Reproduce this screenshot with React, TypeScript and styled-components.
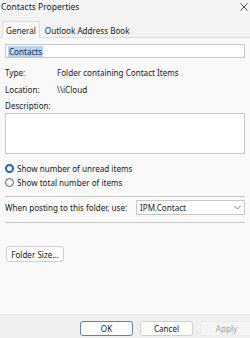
import React from "react";
import styled, { createGlobalStyle } from "styled-components";

const Global = createGlobalStyle`
  html, body { margin: 0; padding: 0; background: #f9f9f9; }
  body { font-family: "Noto Sans", "Open Sans", sans-serif; color: #1b1b1b; }
  * { box-sizing: border-box; }
`;

const Dialog = styled.div`
  width: 250px;
  height: 338px;
  display: flex;
  flex-direction: column;
  background: #f3f3f3;
  overflow: hidden;
`;

const TitleBar = styled.div`
  height: 21px;
  flex: none;
  display: flex;
  align-items: center;
  justify-content: space-between;
  padding: 0 2px 8px 1px;
  font-size: 8.5px;
  color: #1a1a1a;
`;

const TabStrip = styled.div`
  height: 16px;
  flex: none;
  display: flex;
  align-items: flex-end;
  padding-left: 2px;
`;

const Tab = styled.div<{ $active?: boolean }>`
  height: ${(p) => (p.$active ? "17px" : "15px")};
  padding: 0 ${(p) => (p.$active ? "3px" : "4px")};
  display: flex;
  align-items: center;
  font-size: 8.1px;
  background: ${(p) => (p.$active ? "#f9f9f9" : "transparent")};
  border: 1px solid ${(p) => (p.$active ? "#dcdcdc" : "transparent")};
  border-bottom: none;
  margin-bottom: ${(p) => (p.$active ? "-1px" : "0")};
  position: relative;
  z-index: 1;
`;

const Panel = styled.div`
  flex: 1;
  background: #f9f9f9;
  border-top: 1px solid #dcdcdc;
  padding: 6px 5px 0 5px;
  display: flex;
  flex-direction: column;
  font-size: 8.1px;
`;

const NameBox = styled.div`
  height: 14px;
  border: 1px solid #c8c8c8;
  background: #fff;
  display: flex;
  align-items: center;
  padding-left: 2px;
`;

const Selected = styled.span`
  background: #b8d3f0;
  color: #1b2a4a;
  padding: 0 1px;
  line-height: 11px;
`;

const InfoRow = styled.div<{ $h?: number; $top?: number }>`
  display: grid;
  grid-template-columns: 52px 1fr;
  height: ${(p) => p.$h ?? 17}px;
  margin-top: ${(p) => p.$top ?? 0}px;
  align-items: center;
`;

const DescBox = styled.div`
  height: 41px;
  flex: none;
  border: 1px solid #c8c8c8;
  background: #fff;
`;

const RadioList = styled.div`
  margin-top: 7px;
  display: flex;
  flex-direction: column;
`;

const RadioRow = styled.label`
  display: flex;
  align-items: center;
  gap: 3px;
  height: 14px;
`;

const RadioDot = styled.span<{ $on?: boolean }>`
  width: 9px;
  height: 9px;
  border-radius: 50%;
  flex: none;
  background: #fff;
  border: ${(p) => (p.$on ? "2.6px solid #2064b0" : "1px solid #5a5a5a")};
`;

const Rule = styled.div<{ $top?: number }>`
  height: 1px;
  flex: none;
  margin-top: ${(p) => p.$top ?? 0}px;
  background: #c7c7c7;
`;

const PostRow = styled.div`
  display: flex;
  align-items: center;
  justify-content: space-between;
  height: 17px;
  margin: 2px 0 6px;
`;

const Select = styled.div`
  width: 109px;
  height: 15px;
  border: 1px solid #c8c8c8;
  background: #fff;
  display: flex;
  align-items: center;
  justify-content: space-between;
  padding: 0 3px;
`;

const Button = styled.div<{ $primary?: boolean; $disabled?: boolean }>`
  height: 15px;
  display: flex;
  align-items: center;
  justify-content: center;
  font-size: 8.1px;
  background: ${(p) => (p.$disabled ? "#f5f5f5" : "#fdfdfd")};
  color: ${(p) => (p.$disabled ? "#a0a0a0" : "#1b1b1b")};
  border: 1px solid ${(p) => (p.$primary ? "#5d84b0" : p.$disabled ? "#ececec" : "#d0d0d0")};
  border-radius: 3px;
`;

const FolderSizeButton = styled(Button)`
  width: 58px;
  height: 16px;
  margin: 23px 0 0 1px;
`;

const Footer = styled.div`
  height: 24px;
  flex: none;
  background: #efefef;
  border-top: 1px solid #e6e6e6;
  display: grid;
  grid-template-columns: 53px 53px 53px;
  column-gap: 7px;
  justify-content: end;
  align-items: center;
  padding-top: 3px;
  margin-right: -3px;
`;

const CloseIcon = () => (
  <svg width="8" height="8" viewBox="0 0 8 8">
    <path d="M0.5 0.5 L7.5 7.5 M7.5 0.5 L0.5 7.5" stroke="#333" strokeWidth="0.9" fill="none" />
  </svg>
);

const Chevron = () => (
  <svg width="7" height="5" viewBox="0 0 7 5">
    <path d="M0.5 1 L3.5 4 L6.5 1" stroke="#666" strokeWidth="0.8" fill="none" />
  </svg>
);

export default function App() {
  return (
    <>
      <Global />
      <Dialog>
        <TitleBar>
          <span>Contacts Properties</span>
          <CloseIcon />
        </TitleBar>
        <TabStrip>
          <Tab $active>General</Tab>
          <Tab>Outlook Address Book</Tab>
        </TabStrip>
        <Panel>
          <NameBox>
            <Selected>Contacts</Selected>
          </NameBox>
          <InfoRow $top={6}>
            <div>Type:</div>
            <div>Folder containing Contact Items</div>
          </InfoRow>
          <InfoRow>
            <div>Location:</div>
            <div>\\iCloud</div>
          </InfoRow>
          <InfoRow $h={15}>
            <div>Description:</div>
          </InfoRow>
          <DescBox />
          <RadioList>
            <RadioRow>
              <RadioDot $on />
              Show number of unread items
            </RadioRow>
            <RadioRow>
              <RadioDot />
              Show total number of items
            </RadioRow>
          </RadioList>
          <Rule $top={7} />
          <PostRow>
            <span>When posting to this folder, use:</span>
            <Select>
              <span>IPM.Contact</span>
              <Chevron />
            </Select>
          </PostRow>
          <Rule />
          <FolderSizeButton>Folder Size...</FolderSizeButton>
        </Panel>
        <Footer>
          <Button $primary>OK</Button>
          <Button>Cancel</Button>
          <Button $disabled>Apply</Button>
        </Footer>
      </Dialog>
    </>
  );
}
